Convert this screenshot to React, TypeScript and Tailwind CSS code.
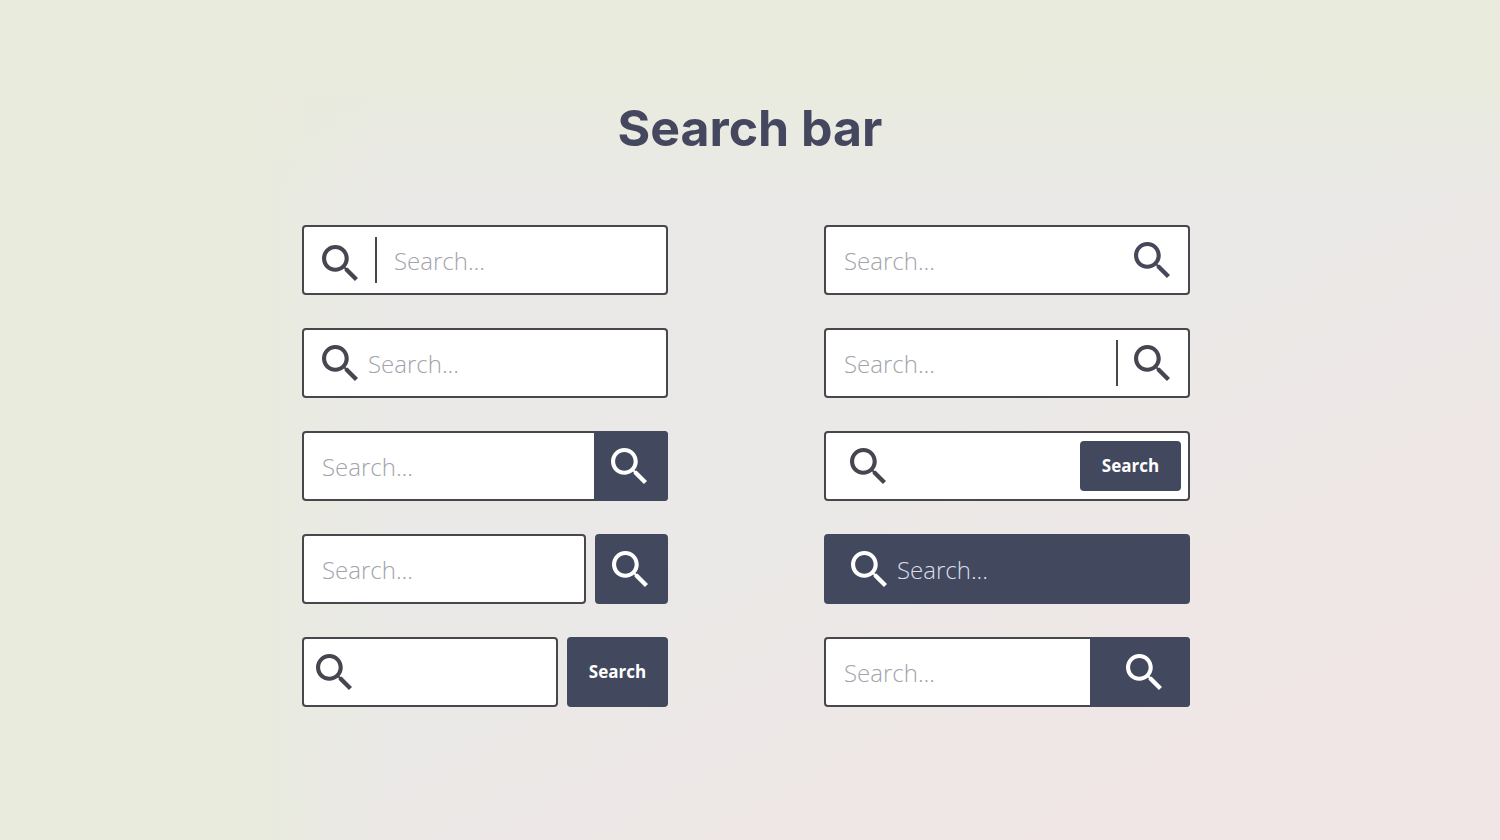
import React from "react";
import clsx from "clsx";

const SearchIcon = ({ className }: { className?: string }) => (
  <svg
    viewBox="3 3 17.49 17.49"
    fill="currentColor"
    aria-hidden="true"
    className={clsx("size-9 shrink-0", className)}
  >
    <path d="M15.5 14h-.79l-.28-.27C15.41 12.59 16 11.11 16 9.5 16 5.91 13.09 3 9.5 3S3 5.91 3 9.5 5.91 16 9.5 16c1.61 0 3.09-.59 4.23-1.57l.27.28v.79l5 4.99L20.49 19l-4.99-5zm-6 0C7.01 14 5 11.99 5 9.5S7.01 5 9.5 5 14 7.01 14 9.5 11.99 14 9.5 14z" />
  </svg>
);

const Divider = () => <span className="h-[46px] w-0.5 shrink-0 bg-[#47474c]" />;

type FieldProps = {
  label: string;
  placeholder?: string;
  className?: string;
};

const Field = ({ label, placeholder, className }: FieldProps) => (
  <input
    type="text"
    aria-label={label}
    placeholder={placeholder}
    className={clsx(
      "h-full min-w-0 flex-1 bg-transparent pt-px text-2xl font-light outline-none",
      className ?? "text-[#45475a] placeholder:text-[#a3a3ab]"
    )}
  />
);

const box = "flex h-[70px] items-center rounded border-2 border-[#47474c] bg-white";
const solid = "flex items-center justify-center rounded bg-[#42495f] text-white";

const App = () => {
  return (
    <main className="min-h-screen bg-[linear-gradient(to_right,#e9ebdd_16%,#e9ebdd00_26%),linear-gradient(to_bottom,#e9ebdd_8%,#e9ebdd00_24%),linear-gradient(to_bottom_right,#eae9e7_55%,#f0e6e6_85%)] pt-24 pb-32 font-['Open_Sans',sans-serif]">
      <h1 className="text-center font-['Inter',sans-serif] text-[50px] leading-16 font-bold text-[#45475f]">
        Search bar
      </h1>

      <div className="mx-auto mt-[65px] grid max-w-[896px] grid-cols-2 gap-x-[156px] pr-2">
        {/* Left column */}
        <div className="flex flex-col gap-[33px]">
          <form className={clsx(box, "gap-[17px] pl-[18px]")}>
            <SearchIcon className="mt-1.5 text-[#45464f]" />
            <Divider />
            <Field label="Search with divider" placeholder="Search..." />
          </form>

          <form className={clsx(box, "gap-2.5 pl-[18px]")}>
            <SearchIcon className="text-[#45464f]" />
            <Field label="Search with icon" placeholder="Search..." />
          </form>

          <form className={clsx(box, "pl-[18px]")}>
            <Field label="Search with attached button" placeholder="Search..." />
            <button
              type="button"
              aria-label="Search"
              className="-my-0.5 -mr-0.5 flex h-[70px] w-[74px] items-center justify-center rounded-r bg-[#42495f] pr-1 text-white"
            >
              <SearchIcon />
            </button>
          </form>

          <form className="flex gap-[9px]">
            <div className={clsx(box, "min-w-0 flex-1 pl-[18px]")}>
              <Field label="Search with icon button" placeholder="Search..." />
            </div>
            <button type="button" aria-label="Search" className={clsx(solid, "w-[73px] pr-1")}>
              <SearchIcon />
            </button>
          </form>

          <form className="flex gap-[9px]">
            <div className={clsx(box, "min-w-0 flex-1 pl-3")}>
              <SearchIcon className="text-[#45464f]" />
              <Field label="Search with text button" />
            </div>
            <button type="button" className={clsx(solid, "w-[101px] text-[17px] font-bold")}>
              Search
            </button>
          </form>
        </div>

        {/* Right column */}
        <div className="flex flex-col gap-[33px]">
          <form className={clsx(box, "px-[18px]")}>
            <Field label="Search with trailing icon" placeholder="Search..." />
            <SearchIcon className="text-[#45475a]" />
          </form>

          <form className={clsx(box, "gap-4 px-[18px]")}>
            <Field label="Search with trailing divider" placeholder="Search..." />
            <Divider />
            <SearchIcon className="text-[#45464f]" />
          </form>

          <form className={clsx(box, "pr-[7px] pl-6")}>
            <SearchIcon className="text-[#45464f]" />
            <Field label="Search with inner button" />
            <button type="button" className={clsx(solid, "h-[50px] w-[101px] text-[17px] font-bold")}>
              Search
            </button>
          </form>

          <form className="flex h-[70px] items-center gap-2.5 rounded bg-[#42495f] pl-[27px]">
            <SearchIcon className="text-white" />
            <Field
              label="Search on dark"
              placeholder="Search..."
              className="text-white placeholder:text-[#dcdfea]"
            />
          </form>

          <form className={clsx(box, "pl-[18px]")}>
            <Field label="Search with wide button" placeholder="Search..." />
            <button
              type="button"
              aria-label="Search"
              className="-my-0.5 -mr-0.5 flex h-[70px] w-[100px] items-center justify-center rounded-r bg-[#42495f] pl-2 text-white"
            >
              <SearchIcon />
            </button>
          </form>
        </div>
      </div>
    </main>
  );
};

export default App;
